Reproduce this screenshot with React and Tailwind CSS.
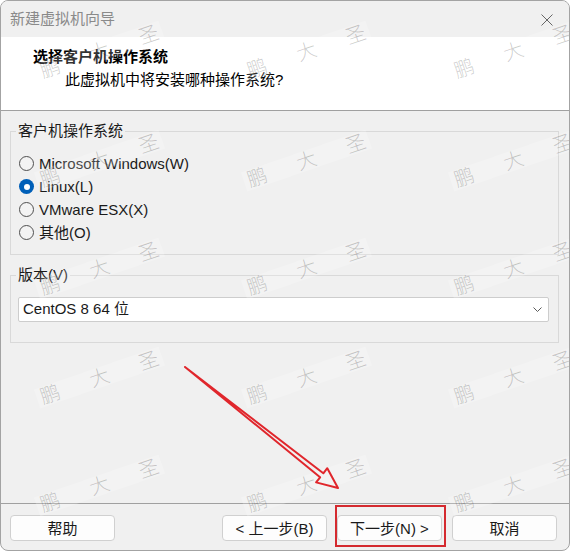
import React from 'react';

const marks = [];
for (let r = 0; r < 5; r++) {
    for (let c = 0; c < 3; c++) {
        marks.push({ x: 50 + 207 * c, y: 72 + 108.5 * r });
    }
}

const Radio = ({ checked, label }) => (
    <label className="flex items-center h-[23px] gap-[5px]">
        {checked ? (
            <span className="w-[15px] h-[15px] rounded-full bg-[#005fb8] flex items-center justify-center">
                <span className="w-[6px] h-[6px] rounded-full bg-white" />
            </span>
        ) : (
            <span className="w-[15px] h-[15px] rounded-full border border-[#4f4f4f] bg-[#f3f3f3]" />
        )}
        <span className="leading-[20px]">{label}</span>
    </label>
);

const Button = ({ children }) => (
    <button className="h-[26px] w-[105px] bg-[#fdfdfd] border border-[#d0d0d0] rounded-[4px] text-[15px] leading-none text-[#1a1a1a] flex items-center justify-center">
        {children}
    </button>
);

const App = () => {
    return (
        <div className="relative w-[570px] h-[551px] flex flex-col bg-[#f0f0f0] border border-[#a3a3a3] rounded-lg overflow-hidden text-[15px] text-[#1a1a1a] font-['Liberation_Sans','Noto_Sans_CJK_SC',sans-serif]">
            {/* title bar */}
            <div className="h-[36px] flex items-center justify-between pl-[9px] pr-[16px] bg-[#f0f0f0]">
                <span className="text-[#8a8a8a]">新建虚拟机向导</span>
                <svg width="12" height="12" viewBox="0 0 12 12" className="mt-[1px]">
                    <path d="M0.5 0.5L11.5 11.5M11.5 0.5L0.5 11.5" stroke="#666" strokeWidth="1" fill="none" />
                </svg>
            </div>

            {/* header */}
            <div className="h-[74px] bg-white border-b border-[#a0a0a0] pt-[10px]">
                <div className="pl-[32px] font-bold leading-[20px] text-black">选择客户机操作系统</div>
                <div className="pl-[64px] mt-[3px] leading-[20px] text-black">此虚拟机中将安装哪种操作系统?</div>
            </div>

            {/* body */}
            <div className="flex-1 flex flex-col">
                <fieldset className="mt-[10px] ml-[9px] mr-[10px] border border-[#d9d9d9] pl-[8px] pb-[10px]">
                    <legend className="ml-[-3px] px-[2px] leading-[20px]">客户机操作系统</legend>
                    <div className="pt-[11px] flex flex-col">
                        <Radio label="Microsoft Windows(W)" />
                        <Radio checked label="Linux(L)" />
                        <Radio label="VMware ESX(X)" />
                        <Radio label="其他(O)" />
                    </div>
                </fieldset>

                <fieldset className="mt-[10px] ml-[9px] mr-[10px] border border-[#d9d9d9] pl-[7px] pr-[9px] pb-[20px]">
                    <legend className="ml-[-2px] px-[2px] leading-[20px]">版本(V)</legend>
                    <div className="pt-[12px]">
                        <div className="h-[25px] bg-white border border-[#cdcdcd] rounded-[2px] flex items-center justify-between pl-[4px] pr-[6px]">
                            <span>CentOS 8 64 位</span>
                            <svg width="9" height="5" viewBox="0 0 9 5">
                                <path d="M0.5 0.5L4.5 4.5L8.5 0.5" stroke="#5a5a5a" strokeWidth="1" fill="none" />
                            </svg>
                        </div>
                    </div>
                </fieldset>
            </div>

            {/* footer */}
            <div className="h-[47px] border-t border-[#a0a0a0] pt-[11px] pl-[9px] pr-[12px] flex">
                <Button>帮助</Button>
                <div className="flex-1" />
                <div className="flex gap-[10px]">
                    <Button>&lt; 上一步(B)</Button>
                    <Button>下一步(N) &gt;</Button>
                    <Button>取消</Button>
                </div>
            </div>

            {/* watermark */}
            {marks.map((m, i) => (
                <div
                    key={i}
                    className="absolute pointer-events-none flex items-center gap-[32px] text-[20px] leading-none text-black/20 font-light origin-left -rotate-[19deg] bg-white/20 px-[4px]"
                    style={{ left: m.x - 14, top: m.y - 10 }}
                >
                    <span>鹏</span>
                    <span>大</span>
                    <span>圣</span>
                </div>
            ))}

            {/* annotation */}
            <div className="absolute left-[334px] top-[504px] w-[111px] h-[42px] border-2 border-[#d42a2f]" />
            <svg className="absolute left-0 top-0 pointer-events-none" width="570" height="551">
                <path
                    d="M184 366 L322.3 472.3 L326.3 467.2 L337 487 L315.1 481.4 L319.1 476.3 Z"
                    stroke="#e0262c"
                    strokeWidth="2"
                    strokeLinejoin="round"
                    fill="none"
                />
            </svg>
        </div>
    );
};

export default App;
